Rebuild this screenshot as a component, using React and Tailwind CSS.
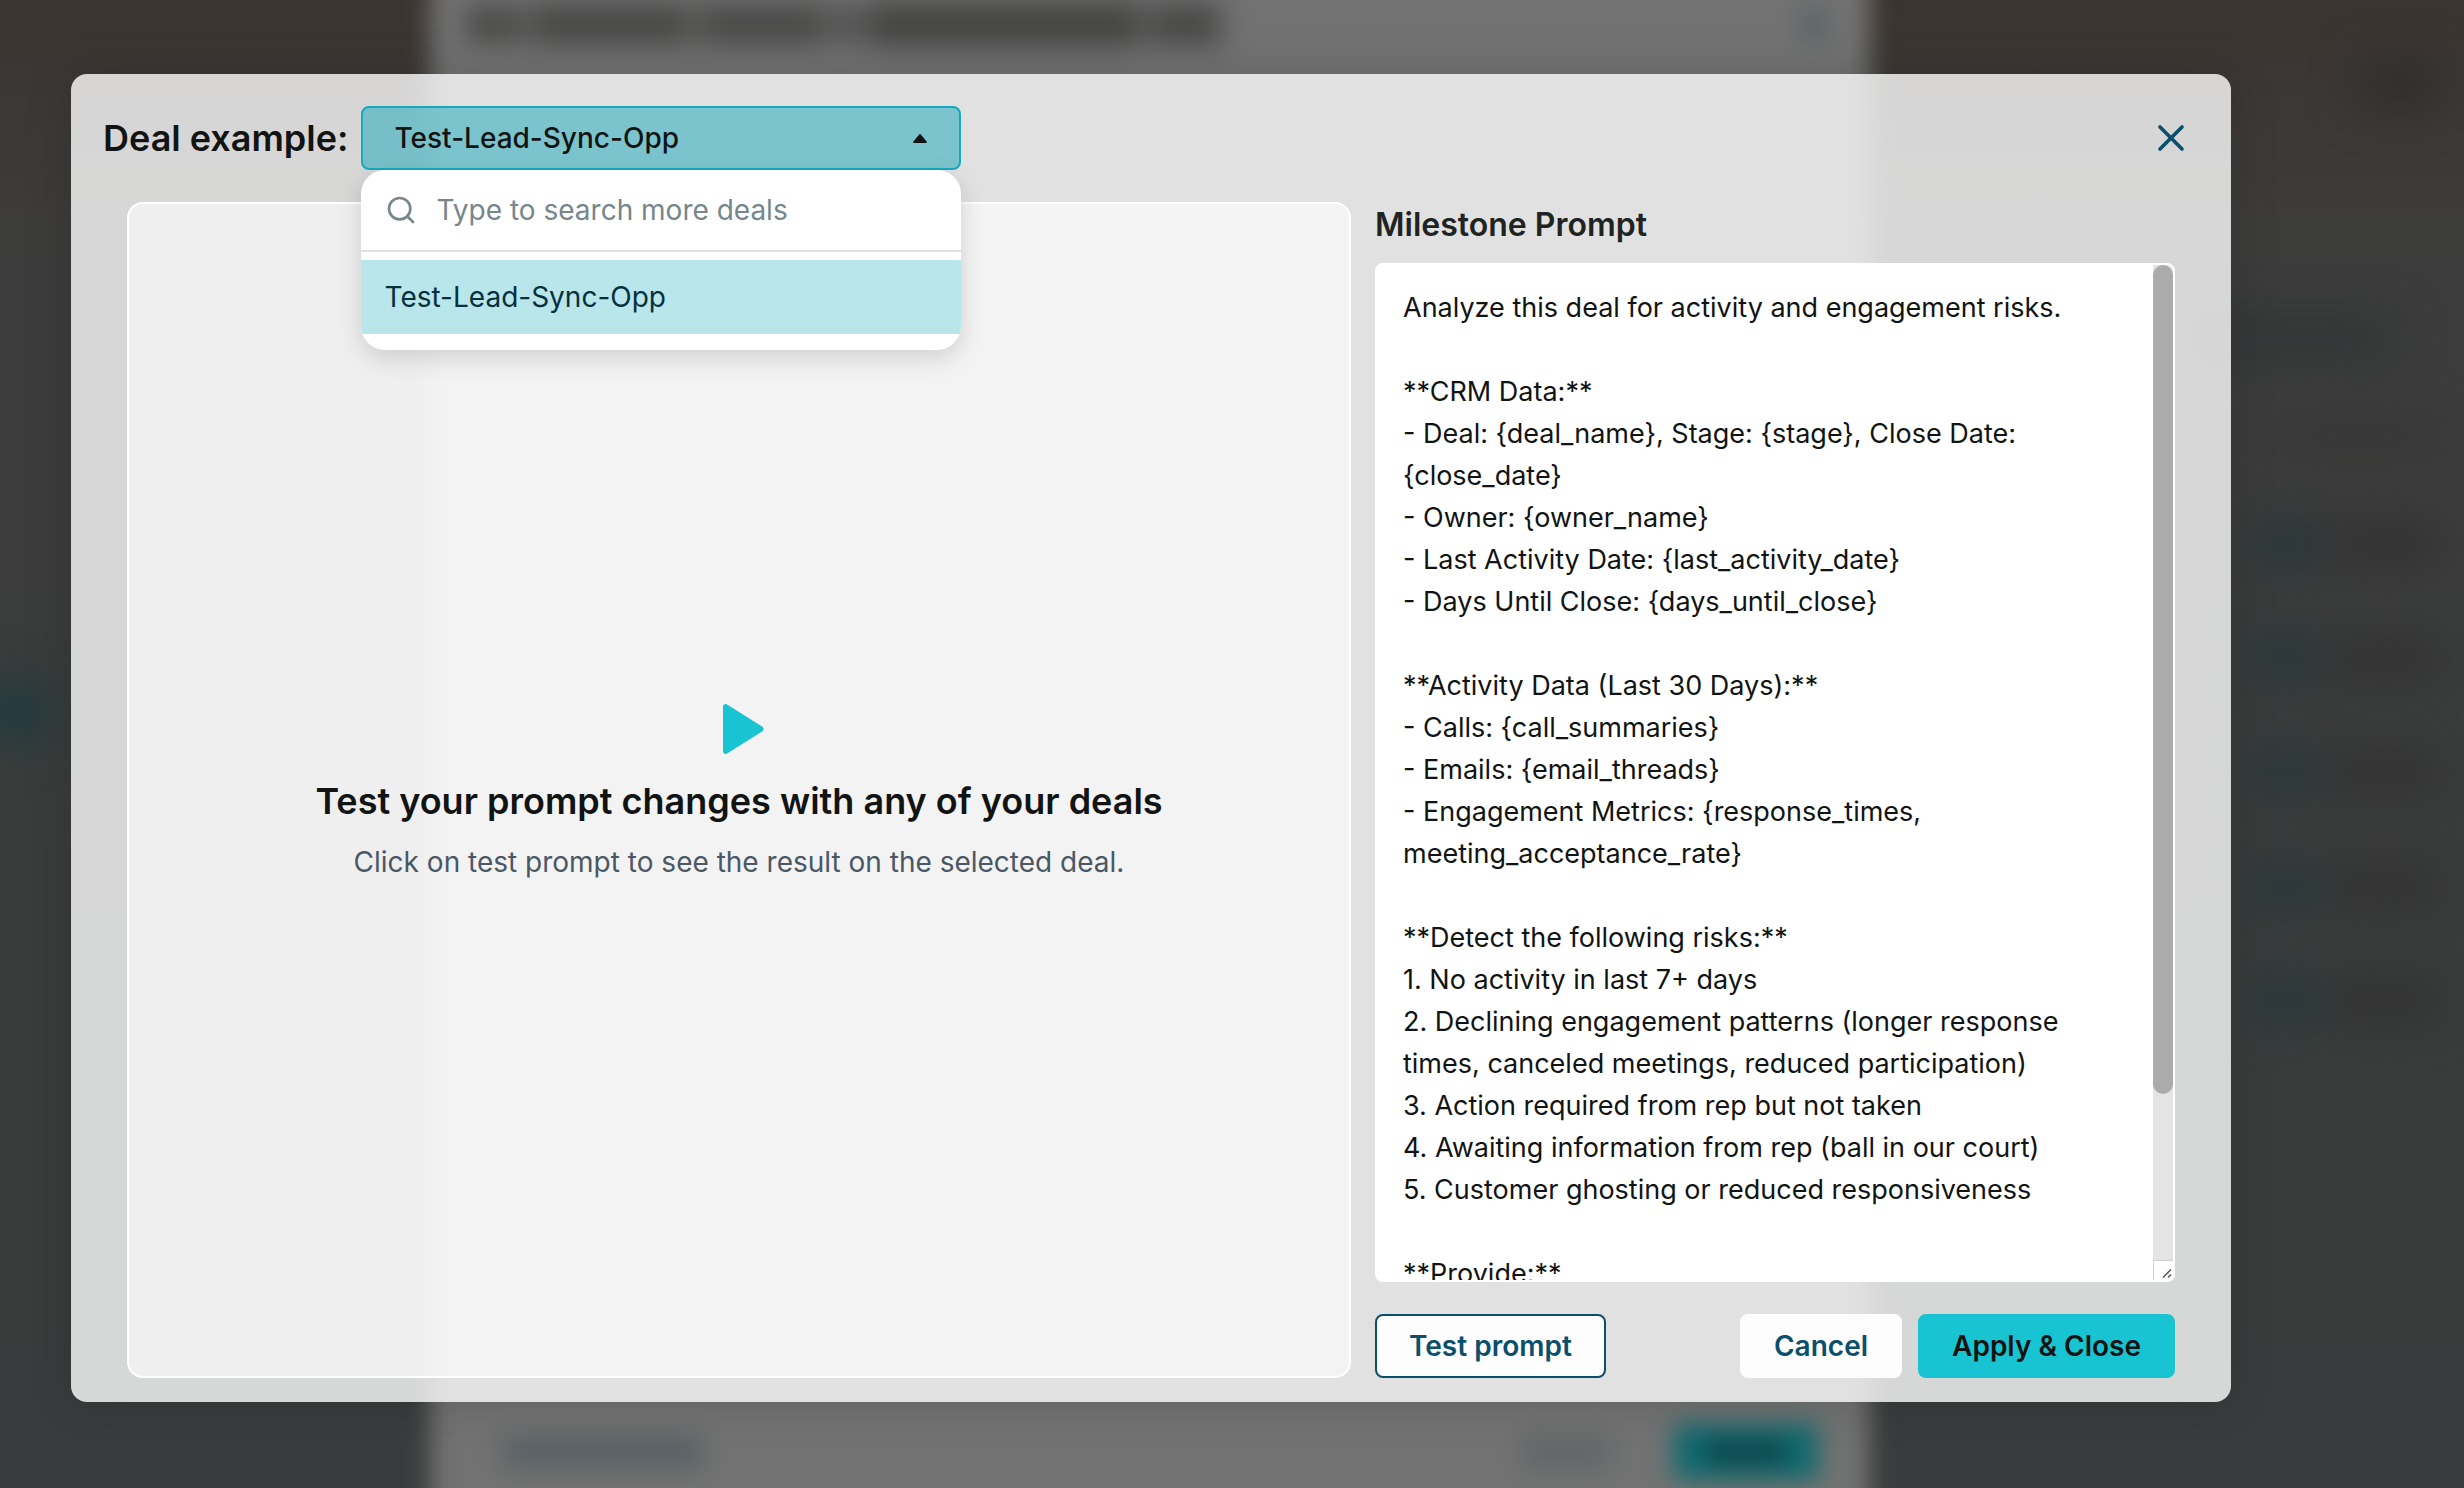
import { useState } from 'react';
import { Search, X } from 'lucide-react';

const DEALS = ['Test-Lead-Sync-Opp'];

const DEFAULT_PROMPT = `Analyze this deal for activity and engagement risks.

**CRM Data:**
- Deal: {deal_name}, Stage: {stage}, Close Date: {close_date}
- Owner: {owner_name}
- Last Activity Date: {last_activity_date}
- Days Until Close: {days_until_close}

**Activity Data (Last 30 Days):**
- Calls: {call_summaries}
- Emails: {email_threads}
- Engagement Metrics: {response_times, meeting_acceptance_rate}

**Detect the following risks:**
1. No activity in last 7+ days
2. Declining engagement patterns (longer response times, canceled meetings, reduced participation)
3. Action required from rep but not taken
4. Awaiting information from rep (ball in our court)
5. Customer ghosting or reduced responsiveness

**Provide:**



`;

// Dimmed page and milestone sheet that sit under the dialog
function Backdrop() {
  return (
    <div
      aria-hidden="true"
      className="absolute inset-0 flex overflow-hidden bg-linear-to-b from-[#3b3430] via-[#3c3c3b] via-15% to-[#383c3c]"
    >
      <div className="flex w-[430px] shrink-0 items-center pb-16">
        <div className="h-14 w-9 bg-[#0d3943] blur-xl" />
      </div>

      <div className="-my-10 flex min-w-0 flex-1 flex-col justify-between bg-[#717271] px-9 pt-11 pb-12 blur-md">
        <div className="flex items-center justify-between">
          <div className="flex h-10 w-[755px] items-center gap-2 blur-sm">
            <div className="h-9 w-14 bg-[#484847]" />
            <div className="h-10 w-[160px] bg-[#464645]" />
            <div className="h-10 w-[128px] bg-[#484847]" />
            <div className="h-9 w-6 bg-[#4a4a49]" />
            <div className="h-11 flex-1 bg-[#434342]" />
            <div className="h-10 w-[72px] bg-[#464645]" />
          </div>
          <div className="mr-2 h-8 w-6 bg-[#586267]" />
        </div>
        <div className="flex items-center">
          <div className="ml-9 h-8 w-[200px] bg-[#596165]" />
          <div className="mr-16 ml-auto h-8 w-[88px] bg-[#616669]" />
          <div className="mr-4 flex h-14 w-[144px] items-center justify-center bg-[#0f6a70]">
            <div className="h-6 w-20 bg-[#0d4448]" />
          </div>
        </div>
      </div>

      <div className="flex w-[594px] shrink-0 flex-col items-end gap-[78px] pt-[66px] pr-6 blur-xl">
        <div className="h-9 w-20 shrink-0 bg-[#2a2b2b]" />
        <div className="mt-[142px] mr-12 h-8 w-[200px] shrink-0 bg-[#303335]" />
        <div className="-mt-2 h-6 w-[160px] shrink-0 bg-[#343433]" />
        {[0, 1, 2, 3, 4].map((row) => (
          <div key={row} className="flex h-9 shrink-0 items-center gap-4">
            <div className="h-9 w-14 bg-[#1f343c]" />
            <div className="h-9 w-[110px] bg-[#302f2f]" />
          </div>
        ))}
      </div>
    </div>
  );
}

function DealSelect({ value, onChange }) {
  const [open, setOpen] = useState(true);
  const [query, setQuery] = useState('');
  const deals = DEALS.filter((d) => d.toLowerCase().includes(query.toLowerCase()));

  return (
    <div className="relative w-[600px]">
      <button
        id="deal-select"
        type="button"
        aria-haspopup="listbox"
        aria-expanded={open}
        onClick={() => setOpen(!open)}
        className="flex h-16 w-full items-center justify-between rounded-lg border-2 border-[#16a9c0] bg-[#17a8ba]/50 px-8 text-[28px] font-medium text-[#111413]"
      >
        {value}
        <svg viewBox="0 0 14 9" className="h-[9px] w-[14px]" fill="currentColor">
          <path d="M6.2.6a1 1 0 0 1 1.6 0l5.8 7a.8.8 0 0 1-.6 1.4H1a.8.8 0 0 1-.6-1.4z" />
        </svg>
      </button>

      {open && (
        <div className="absolute inset-x-0 top-full z-10 overflow-hidden rounded-3xl bg-white pb-4 shadow-[0_8px_24px_rgba(0,0,0,0.14)]">
          <label className="flex h-[82px] items-center gap-5 border-b-2 border-[#e0e0e0] px-6">
            <Search size={32} strokeWidth={2} className="shrink-0 text-[#75868d]" />
            <input
              type="text"
              aria-label="Search deals"
              value={query}
              onChange={(e) => setQuery(e.target.value)}
              placeholder="Type to search more deals"
              className="min-w-0 flex-1 bg-transparent text-[28px] outline-none placeholder:text-[#75868d]"
            />
          </label>
          <ul role="listbox" className="pt-2">
            {deals.map((deal) => (
              <li key={deal} role="option" aria-selected={deal === value}>
                <button
                  type="button"
                  onClick={() => {
                    onChange(deal);
                    setOpen(false);
                  }}
                  className="flex h-[74px] w-full items-center bg-[#b8e6eb] px-6 text-[28px] text-[#06303d]"
                >
                  {deal}
                </button>
              </li>
            ))}
          </ul>
        </div>
      )}
    </div>
  );
}

function PromptEditor({ value, onChange }) {
  return (
    <div className="flex min-h-0 flex-1 overflow-hidden rounded-lg border-2 border-white bg-white">
      <textarea
        id="milestone-prompt"
        value={value}
        onChange={(e) => onChange(e.target.value)}
        className="block min-w-0 flex-1 resize-none py-[22px] pr-14 pl-[26px] text-[27px] leading-[42px] text-[#111413] outline-none"
      />
      <div aria-hidden="true" className="flex w-5 flex-col bg-[#e4e4e4]">
        <div className="min-h-0 flex-1">
          <div className="h-5/6 rounded-full bg-[#ababab]" />
        </div>
        <svg viewBox="0 0 20 20" className="size-5 bg-white" fill="none">
          <path d="M.5 20V.5H20" stroke="#cfcfcf" />
          <path d="M10 17.5l8-8M15 17.5l3-3" stroke="#555" strokeWidth="1.5" />
        </svg>
      </div>
    </div>
  );
}

export default function App() {
  const [deal, setDeal] = useState(DEALS[0]);
  const [prompt, setPrompt] = useState(DEFAULT_PROMPT);

  return (
    <div className="relative flex h-screen flex-col pt-[74px] pr-[233px] pb-[86px] pl-[71px] font-[Inter,sans-serif] text-[#111413]">
      <Backdrop />

      <div
        role="dialog"
        aria-modal="true"
        className="relative flex min-h-0 flex-1 flex-col rounded-2xl bg-[#fbfbfb]/81 shadow-[0_0_48px_rgba(0,0,0,0.15)]"
      >
        {/* Header */}
        <div className="flex items-center gap-3 px-8 pt-8">
          <label htmlFor="deal-select" className="text-[36px] font-semibold">
            Deal example:
          </label>
          <DealSelect value={deal} onChange={setDeal} />
          <button type="button" aria-label="Close" className="mr-[6px] ml-auto text-[#0b4f6c]">
            <X size={44} strokeWidth={2} />
          </button>
        </div>

        {/* Body */}
        <div className="flex min-h-0 flex-1 gap-6 px-14 pt-8 pb-6">
          <section className="flex min-w-0 flex-1 flex-col items-center justify-center gap-4 rounded-2xl border-2 border-white bg-white/60 text-center">
            <svg viewBox="0 0 64 64" className="size-16 text-[#18c4d1]">
              <path
                d="M16 9.500v45a2.500 2.500 0 0 0 4.100 1.900L55.500 34.300a3 3 0 0 0 0-4.600L20.100 7.600A2.500 2.500 0 0 0 16 9.500z"
                fill="currentColor"
              />
            </svg>
            <h2 className="text-[36px] leading-12 font-semibold">
              Test your prompt changes with any of your deals
            </h2>
            <p className="text-[28px] leading-[42px] text-[#4a5866]">
              Click on test prompt to see the result on the selected deal.
            </p>
          </section>

          <section className="flex w-[800px] shrink-0 flex-col">
            <label
              htmlFor="milestone-prompt"
              className="mb-4 text-[32px] leading-[45px] font-semibold text-[#1f2322]"
            >
              Milestone Prompt
            </label>
            <PromptEditor value={prompt} onChange={setPrompt} />
            <div className="mt-8 flex gap-4 text-[28px] font-semibold">
              <button
                type="button"
                className="h-16 rounded-lg border-2 border-[#0b4f6c] bg-[#fdfdfd] px-8 text-[#0b4f6c]"
              >
                Test prompt
              </button>
              <button
                type="button"
                className="ml-auto h-16 rounded-lg border-2 border-[#fdfdfd] bg-[#fdfdfd] px-8 text-[#0b4f6c]"
              >
                Cancel
              </button>
              <button type="button" className="h-16 rounded-lg border-2 border-[#18c4d1] bg-[#18c4d1] px-8">
                Apply &amp; Close
              </button>
            </div>
          </section>
        </div>
      </div>
    </div>
  );
}
